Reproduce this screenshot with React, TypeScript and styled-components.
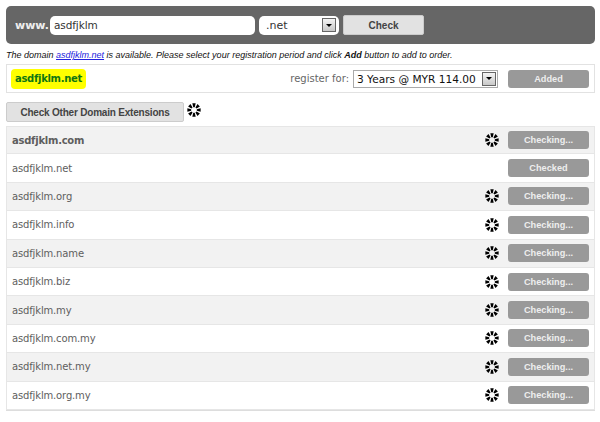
import styled, { createGlobalStyle } from 'styled-components';

const GlobalStyle = createGlobalStyle`
  html, body {
    margin: 0;
    padding: 0;
    background: #fff;
    font-family: 'DejaVu Sans', Verdana, sans-serif;
  }
`;

const Page = styled.div`
  width: 600px;
  height: 422px;
  padding: 6px 5px 0 6px;
  box-sizing: border-box;
  overflow: hidden;
`;

const SearchBar = styled.div`
  height: 38px;
  box-sizing: border-box;
  background: #666;
  border-radius: 5px;
  display: flex;
  align-items: center;
  padding: 0 0 0 9px;
`;

const Prefix = styled.span`
  color: #eee;
  font-size: 11px;
  font-weight: bold;
  width: 35px;
`;

const DomainInput = styled.div`
  width: 205px;
  height: 19px;
  box-sizing: border-box;
  background: #fff;
  border-radius: 5px;
  font-size: 10.5px;
  letter-spacing: -0.1px;
  line-height: 19px;
  color: #333;
  padding-left: 4px;
`;

const TldSelect = styled.div`
  width: 80px;
  height: 19px;
  margin: 0 4px;
  box-sizing: border-box;
  background: #fff;
  border-radius: 5px;
  display: flex;
  align-items: center;
  justify-content: space-between;
  padding: 0 3px 0 7px;
  font-size: 11px;
  color: #333;
`;

const Arrow = styled.span`
  width: 14px;
  height: 14px;
  flex: none;
  box-sizing: border-box;
  border: 1px solid #666;
  background: linear-gradient(#f4f4f4, #c8c8c8);
  display: flex;
  align-items: center;
  justify-content: center;
  &::after {
    content: '';
    border-left: 3px solid transparent;
    border-right: 3px solid transparent;
    border-top: 3px solid #000;
  }
`;

const GreyButton = styled.div<{ $width: number }>`
  width: ${(p) => p.$width}px;
  height: 20px;
  box-sizing: border-box;
  background: #e2e2e2;
  border: 1px solid #ccc;
  border-radius: 2px;
  color: #444;
  font-family: 'Liberation Sans', Arial, sans-serif;
  font-size: 10px;
  font-weight: bold;
  line-height: 19px;
  text-align: center;
  flex: none;
`;

const OtherButton = styled(GreyButton)`
  letter-spacing: -0.2px;
`;

const Notice = styled.p`
  margin: 5px 0 0;
  height: 15px;
  font-family: 'Liberation Sans', Arial, sans-serif;
  font-style: italic;
  font-size: 9px;
  line-height: 12px;
  color: #111;
  a {
    color: #2222dd;
    text-decoration: underline;
  }
`;

const ResultPanel = styled.div`
  height: 29px;
  box-sizing: border-box;
  border: 1px solid #e2e2e2;
  display: flex;
  align-items: center;
  padding: 0 5px 0 4px;
`;

const Highlight = styled.span`
  background: #ffff00;
  border-radius: 4px;
  color: #117711;
  font-size: 10px;
  font-weight: bold;
  letter-spacing: -0.3px;
  height: 20px;
  line-height: 20px;
  padding: 0 4px;
`;

const RegisterLabel = styled.span`
  margin-left: auto;
  font-size: 10px;
  color: #666;
`;

const PeriodSelect = styled.div`
  width: 145px;
  height: 18px;
  margin-left: 4px;
  box-sizing: border-box;
  border: 1px solid #aaa;
  display: flex;
  align-items: center;
  justify-content: space-between;
  padding: 0 1px 0 3px;
  font-size: 10.6px;
  color: #111;
`;

const StatusButton = styled.div`
  width: 81px;
  height: 18px;
  flex: none;
  box-sizing: border-box;
  background: #999;
  border-radius: 3px;
  color: #eee;
  font-family: 'Liberation Sans', Arial, sans-serif;
  font-size: 9.2px;
  font-weight: bold;
  line-height: 18px;
  text-align: center;
`;

const AddedButton = styled(StatusButton)`
  margin-left: 10px;
`;

const OtherRow = styled.div`
  margin-top: 9px;
  height: 24px;
  display: flex;
  gap: 3px;
`;

const List = styled.div`
  border-bottom: 1px solid #ddd;
  width: 100%;
`;

const Row = styled.div<{ $odd: boolean }>`
  height: 28.4px;
  box-sizing: border-box;
  border: 1px solid #e6e6e6;
  border-top-width: 0;
  background: ${(p) => (p.$odd ? '#f2f2f2' : '#fff')};
  display: flex;
  align-items: center;
  padding: 0 5px;
  &:first-child {
    border-top-width: 1px;
  }
`;

const DomainName = styled.span<{ $bold?: boolean }>`
  font-size: 10px;
  letter-spacing: ${(p) => (p.$bold ? '-0.25px' : '-0.15px')};
  color: #5e5e5e;
  font-weight: ${(p) => (p.$bold ? 'bold' : 'normal')};
  flex: 1;
`;

const SpinnerBox = styled.svg`
  flex: none;
  width: 14px;
  height: 14px;
  margin-top: 1px;
`;

const RowSpinner = styled(SpinnerBox)`
  margin: 0 9px 0 0;
`;

function Spinner({ inRow }: { inRow?: boolean }) {
  const Comp = inRow ? RowSpinner : SpinnerBox;
  return (
    <Comp viewBox="0 0 16 16">
      {[0, 45, 90, 135, 180, 225, 270, 315].map((a) => (
        <polygon
          key={a}
          points="6.1,0.4 9.9,0.4 8.9,4.8 7.1,4.8"
          fill="#000"
          transform={`rotate(${a} 8 8)`}
        />
      ))}
    </Comp>
  );
}

const domains = [
  'asdfjklm.com',
  'asdfjklm.net',
  'asdfjklm.org',
  'asdfjklm.info',
  'asdfjklm.name',
  'asdfjklm.biz',
  'asdfjklm.my',
  'asdfjklm.com.my',
  'asdfjklm.net.my',
  'asdfjklm.org.my',
];

export default function App() {
  return (
    <Page>
      <GlobalStyle />
      <SearchBar>
        <Prefix>www.</Prefix>
        <DomainInput>asdfjklm</DomainInput>
        <TldSelect>
          .net
          <Arrow />
        </TldSelect>
        <GreyButton $width={81}>Check</GreyButton>
      </SearchBar>
      <Notice>
        The domain <a>asdfjklm.net</a> is available. Please select your registration period and
        click <b>Add</b> button to add to order.
      </Notice>
      <ResultPanel>
        <Highlight>asdfjklm.net</Highlight>
        <RegisterLabel>register for:</RegisterLabel>
        <PeriodSelect>
          3 Years @ MYR 114.00
          <Arrow />
        </PeriodSelect>
        <AddedButton>Added</AddedButton>
      </ResultPanel>
      <OtherRow>
        <OtherButton $width={178}>Check Other Domain Extensions</OtherButton>
        <Spinner />
      </OtherRow>
      <List>
        {domains.map((d, i) => (
          <Row key={d} $odd={i % 2 === 0}>
            <DomainName $bold={i === 0}>{d}</DomainName>
            {d !== 'asdfjklm.net' && <Spinner inRow />}
            <StatusButton>{d === 'asdfjklm.net' ? 'Checked' : 'Checking...'}</StatusButton>
          </Row>
        ))}
      </List>
    </Page>
  );
}
